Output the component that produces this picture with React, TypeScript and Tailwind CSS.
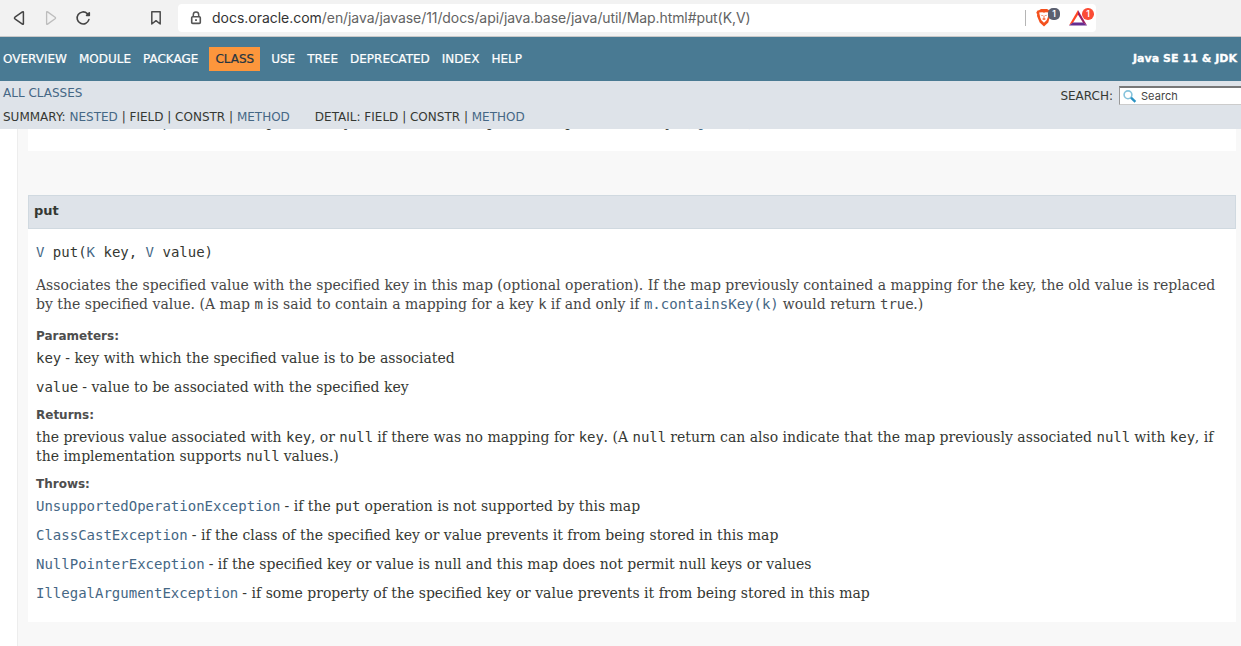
import type { ReactNode } from "react";

const Code = ({ children }: { children: ReactNode }) => (
  <code className="-mr-[0.4px] font-['DejaVu_Sans_Mono',monospace] text-[14px] leading-none tracking-normal">{children}</code>
);

const Ref = ({ children }: { children: ReactNode }) => <a className="text-[#456785]">{children}</a>;

const Label = ({ children }: { children: ReactNode }) => (
  <dt className="h-[14px] font-['DejaVu_Sans',sans-serif] text-[12px] leading-[14px] font-bold text-[#4e4e4e]">
    {children}
  </dt>
);

function Row({ name, link, children }: { name: string; link?: boolean; children: ReactNode }) {
  return (
    <dd className="mb-[10px] h-[19px] whitespace-nowrap">
      <Code>{link ? <Ref>{name}</Ref> : name}</Code> - {children}
    </dd>
  );
}

function BrowserBar() {
  return (
    <div className="flex h-[37px] shrink-0 items-start border-b border-[#c9c9c9] bg-[#f2f2f2]">
      <svg className="mt-[9px] ml-[12px] h-[18px] w-[80px]" viewBox="0 0 80 18" fill="none">
        <path d="M11.4 3.3Q11.4 2.3 10.4 2.9L2.9 8.2Q2 9 2.9 9.8L10.4 15.1Q11.4 15.7 11.4 14.7Z" stroke="#444" strokeWidth="1.5" strokeLinejoin="round" />
        <path d="M34.6 3.3Q34.6 2.3 35.6 2.9L43.1 8.2Q44 9 43.1 9.8L35.6 15.1Q34.6 15.7 34.6 14.7Z" stroke="#bdbdbd" strokeWidth="1.3" strokeLinejoin="round" />
        <path d="M75.3 4.6A6 6 0 1 0 76.9 10.6" stroke="#444" strokeWidth="1.6" strokeLinecap="round" />
        <path d="M77.3 3.9V6.4H74.6Z" fill="#444" stroke="#444" strokeWidth="1.6" strokeLinejoin="round" />
      </svg>
      <svg className="mt-[10px] ml-[58px] h-[16px] w-[12px]" viewBox="0 0 12 16" fill="none">
        <path d="M1.8 1.8H10.2V14L6 10.7L1.8 14Z" stroke="#4c4c4c" strokeWidth="1.5" strokeLinejoin="round" />
      </svg>
      <div className="mt-[4px] ml-[16px] flex h-[28px] w-[918px] items-center rounded-[4px] bg-white">
        <svg className="ml-[12px] h-[14px] w-[12px] shrink-0" viewBox="0 0 12 14" fill="none">
          <path d="M3.3 6V3.8a2.7 2.7 0 0 1 5.4 0V6" stroke="#555" strokeWidth="1.5" />
          <rect x="1.7" y="5.8" width="8.6" height="6.6" rx="1" stroke="#555" strokeWidth="1.6" />
          <rect x="5.1" y="8.2" width="1.8" height="1.8" fill="#555" />
        </svg>
        <div className="ml-[10px] w-[813px] text-[14px] leading-[20px] tracking-[-0.08px] whitespace-nowrap text-[#636363] font-['Inter',sans-serif]">
          <span className="tracking-[-0.02px] text-[#333]">docs.oracle.com</span>/en/java/javase/11/docs/api/java.base/java/util/Map.html#put(K,V)
        </div>
        <div className="h-[16px] w-px bg-[#b5b5b5]" />
        <svg className="ml-[10px] h-[24px] w-[60px] shrink-0" viewBox="0 0 60 24">
          <path d="M3 4.2L5 3H11L13.2 4.2L14.6 6.5L13.8 8.4L14 10L12.3 16.5L8 20.5L3.7 16.5L1 10L1.2 8.4L.3 6.5L1.5 4.5Z" fill="#f4511e" />
          <path d="M3.2 6.6L6.3 6.2L8 6.8L9.7 6.2L12.7 6.6L11.8 11.6L10.6 14.3L8 16.7L5.4 14.3L4.2 11.6Z" fill="#fff" />
          <path d="M4.4 8.7L7 9.2L6.4 10ZM11.6 8.7L9 9.2L9.6 10ZM7.6 9.5H8.4V12H7.6ZM6 13L8 12L10 13L8 14Z" fill="#f4511e" />
          <rect x="12" y="2" width="12" height="12" rx="5" fill="#5b6070" />
          <path d="M42 4L33 19.5L37 16.8L42 8.8Z" fill="#ff4724" />
          <path d="M42 4L51 19.5L47 16.8L42 8.8Z" fill="#9e1f63" />
          <path d="M33 19.5L37 16.6H47L51 19.5Z" fill="#662d91" />
          <rect x="46" y="2" width="12" height="12" rx="5.8" fill="#fb4c35" />
          <text x="18" y="11" textAnchor="middle" fontSize="8.5" fontWeight="600" fontFamily="Inter, sans-serif" fill="#fff">1</text>
          <text x="52" y="11" textAnchor="middle" fontSize="8.5" fontWeight="600" fontFamily="Inter, sans-serif" fill="#fff">1</text>
        </svg>
      </div>
    </div>
  );
}

function NavBar() {
  return (
    <nav className="flex h-[44px] shrink-0 items-center bg-[#497A93] pl-[3px] whitespace-nowrap text-white">
      <div className="flex h-[24px] items-center gap-[12px] leading-[24px] [-webkit-text-stroke:0.2px]">
        <a>OVERVIEW</a>
        <a>MODULE</a>
        <a>PACKAGE</a>
        <a className="-mx-[1px] bg-[#FD963C] px-[6px] text-[#253441]">CLASS</a>
        <a>USE</a>
        <a>TREE</a>
        <a>DEPRECATED</a>
        <a>INDEX</a>
        <a>HELP</a>
      </div>
      <div className="mr-[4px] ml-auto text-[11px] font-bold tracking-[0.03px] [-webkit-text-stroke:0.3px]">Java SE 11 &amp; JDK</div>
    </nav>
  );
}

function SubNav() {
  return (
    <div className="flex h-[48px] shrink-0 justify-between bg-[#dee3e9] pl-[3px] whitespace-nowrap">
      <div className="flex flex-col">
        <div className="h-[24px] leading-[24px]"><Ref>ALL CLASSES</Ref></div>
        <div className="flex h-[24px] gap-[25px] leading-[24px]">
          <div>SUMMARY: <Ref>NESTED</Ref> | FIELD | CONSTR | <Ref>METHOD</Ref></div>
          <div>DETAIL: FIELD | CONSTR | <Ref>METHOD</Ref></div>
        </div>
      </div>
      <div className="flex">
        <div className="mt-[3px] leading-[24px]">SEARCH:</div>
        <div className="mt-[5px] ml-[6px] flex h-[19px] w-[122px] items-center border-t-2 border-b border-l border-t-[#777] border-b-[#ccc] border-l-[#999] bg-white">
          <svg className="ml-[3px] h-[13px] w-[14px]" viewBox="0 0 14 13" fill="none">
            <circle cx="5" cy="4.8" r="3.9" stroke="#86c3dc" strokeWidth="1.6" />
            <path d="M8 7.7L12.4 11.8" stroke="#2b93c4" strokeWidth="2.4" />
          </svg>
          <span className="ml-[4px] font-['Inter',sans-serif] text-[11px] leading-[14px] tracking-[0.05px] text-[#444]">Search</span>
        </div>
      </div>
    </div>
  );
}

export default function App() {
  return (
    <div className="flex h-[646px] w-[1241px] flex-col overflow-hidden bg-white font-['DejaVu_Sans',sans-serif] text-[12px] text-[#353833]">
      <BrowserBar />
      <NavBar />
      <SubNav />
      <main className="ml-[17px] flex flex-1 flex-col overflow-hidden border-l border-[#ededed] bg-[#f8f8f8] pr-[5px] pl-[10px] font-['DejaVu_Serif',serif] text-[14px] leading-[19px]">
        <section className="h-[22px] shrink-0 bg-white pl-[8px]">
          <dl className="-mt-[16px]">
            <Row name="NullPointerException" link>
              if the specified key is null and this map does not permit null keys (<Ref>optional</Ref>)
            </Row>
          </dl>
        </section>
        <section className="mt-[44px] h-[427px] shrink-0 bg-white">
          <h4 className="h-[34px] border border-[#d0d9e0] bg-[#dee3e9] pl-[5px] font-['DejaVu_Sans',sans-serif] text-[13px] leading-[30px] font-bold">put</h4>
          <div className="px-[8px] pt-[14px]">
            <pre className="h-[19px] font-['DejaVu_Sans_Mono',monospace] text-[14px] leading-[19px]">
              <Ref>V</Ref> put(<Ref>K</Ref> key, <Ref>V</Ref> value)
            </pre>
            <div className="mt-[14px] text-[#474747]">
              <p className="h-[19px] tracking-[0.005px] whitespace-nowrap">
                Associates the specified value with the specified key in this map (optional operation). If the map previously contained a mapping for the key, the old value is replaced
              </p>
              <p className="h-[19px] whitespace-nowrap">
                by the specified value. (A map <Code>m</Code> is said to contain a mapping for a key <Code>k</Code> if and only if <Code><Ref>m.containsKey(k)</Ref></Code> would return <Code>true</Code>.)
              </p>
            </div>
            <dl className="mt-[15px]">
              <Label>Parameters:</Label>
              <div className="mt-[6px]">
                <Row name="key">key with which the specified value is to be associated</Row>
                <Row name="value">value to be associated with the specified key</Row>
              </div>
              <div className="h-px" />
              <Label>Returns:</Label>
              <dd className="mt-[6px] mb-[11px] whitespace-nowrap">
                <div className="h-[19px]">
                  the previous value associated with <Code>key</Code>, or <Code>null</Code> if there was no mapping for <Code>key</Code>. (A <Code>null</Code> return can also indicate that the map previously associated <Code>null</Code> with <Code>key</Code>, if
                </div>
                <div className="h-[19px]">the implementation supports <Code>null</Code> values.)</div>
              </dd>
              <Label>Throws:</Label>
              <div className="mt-[6px]">
                <Row name="UnsupportedOperationException" link>if the <Code>put</Code> operation is not supported by this map</Row>
                <Row name="ClassCastException" link>if the class of the specified key or value prevents it from being stored in this map</Row>
                <Row name="NullPointerException" link>if the specified key or value is null and this map does not permit null keys or values</Row>
                <Row name="IllegalArgumentException" link>if some property of the specified key or value prevents it from being stored in this map</Row>
              </div>
            </dl>
          </div>
        </section>
      </main>
    </div>
  );
}
